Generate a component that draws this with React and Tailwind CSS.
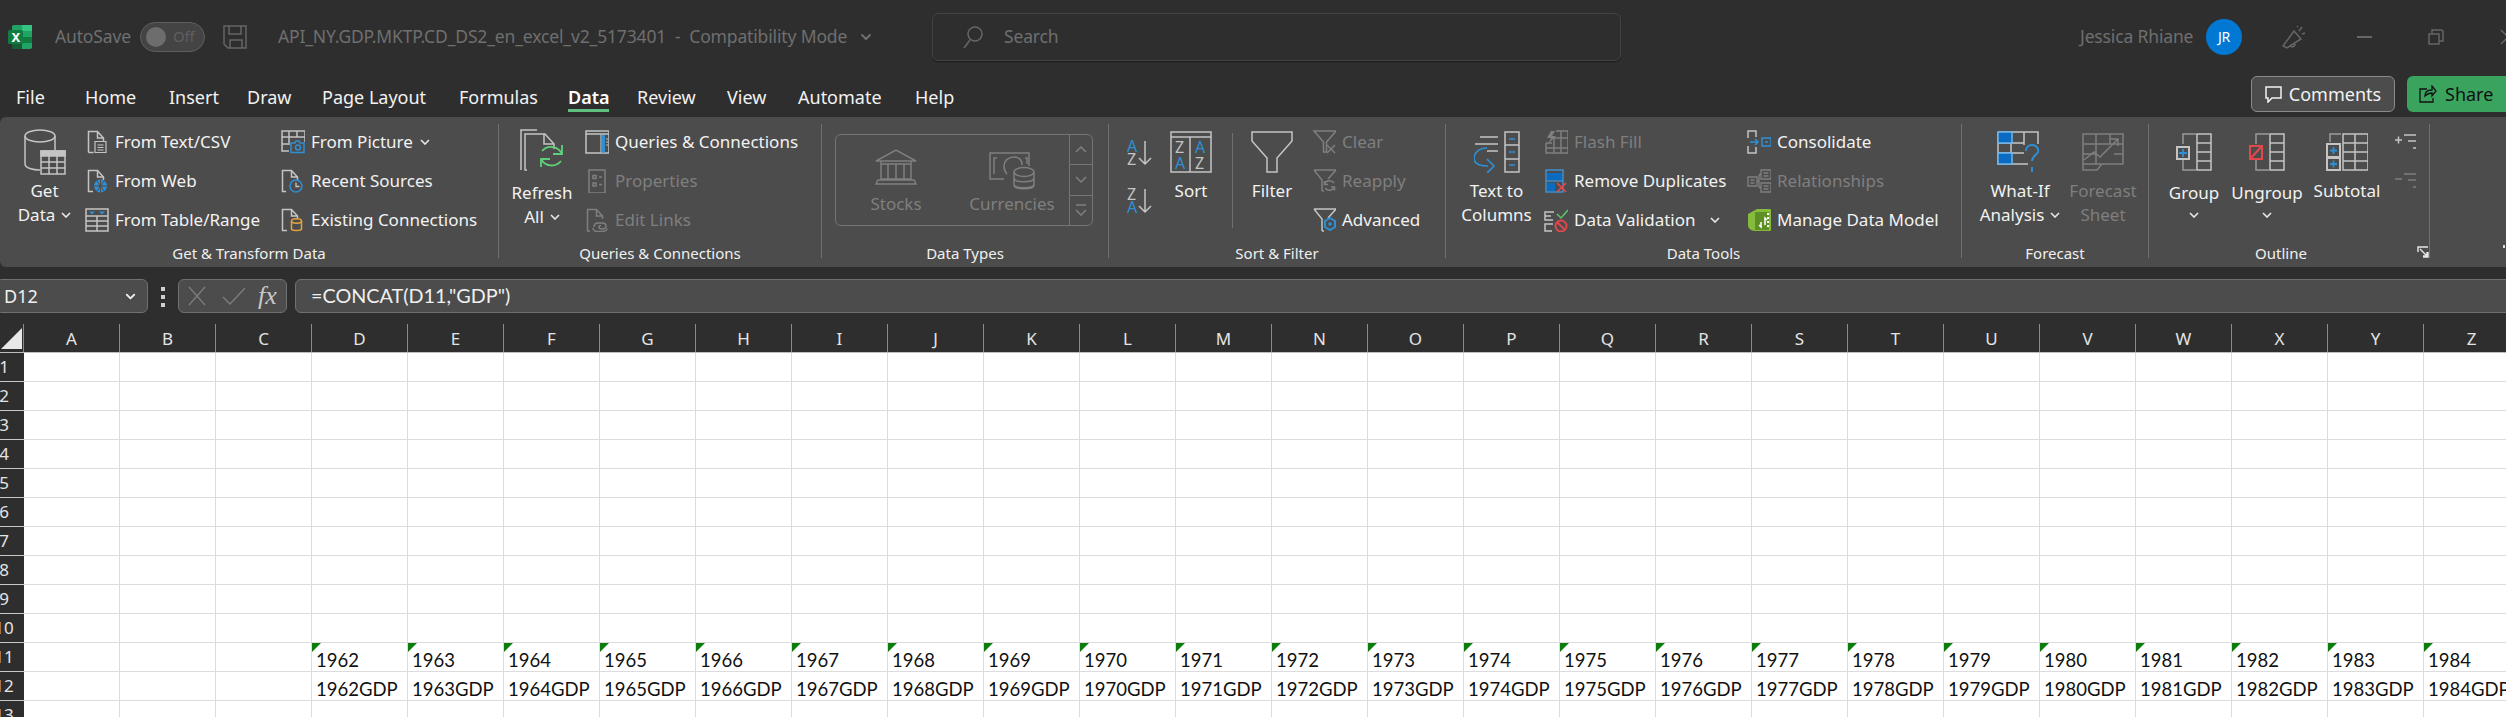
import { ChevronDown } from "lucide-react";

const GRAY = "#c4c4c4";
const DIM = "#7f7f7f";
const BLUE = "#2f8fd5";
const columns = "ABCDEFGHIJKLMNOPQRSTUVWXYZ".split("");
const rows = Array.from({ length: 13 }, (_, i) => i + 1);

const tabs = [
  { label: "File", width: "w-[69px]" },
  { label: "Home", width: "w-[84px]" },
  { label: "Insert", width: "w-[78px]" },
  { label: "Draw", width: "w-[75px]" },
  { label: "Page Layout", width: "w-[137px]" },
  { label: "Formulas", width: "w-[109px]" },
  { label: "Data", width: "w-[69px]", active: true },
  { label: "Review", width: "w-[90px]" },
  { label: "View", width: "w-[71px]" },
  { label: "Automate", width: "w-[117px]" },
  { label: "Help", width: "w-[50px]" },
];

function Ico({ w = 24, h = 24, color = GRAY, children }) {
  return (
    <svg width={w} height={h} viewBox={`0 0 ${w} ${h}`} fill="none" stroke={color} strokeWidth="1.5" className="shrink-0">
      {children}
    </svg>
  );
}

function Chevron({ className = "" }) {
  return (
    <svg width="10" height="6" viewBox="0 0 10 6" fill="none" stroke="#e8e8e8" strokeWidth="1.6" className={className}>
      <path d="M1 1l4 4 4-4" />
    </svg>
  );
}

const Page = ({ color = GRAY }) => <path d="M8 22.5H3.5V1.5h9l6 6.5v3" stroke={color} />;

const icons = {
  text: (
    <Ico>
      <path d="M3.5 22.5V1.5h9l6 6.5v4M12.500 1.500v6.500h6M3.500 22.500h5" />
      <path d="M10 11.500h11v11H10zM12.500 15h6M12.500 17.500h6M12.500 20h6" strokeWidth="1.200" />
    </Ico>
  ),
  web: (
    <Ico>
      <Page />
      <path d="M12.500 1.500v6.500h6" />
      <circle cx="15.500" cy="17" r="6.500" fill={BLUE} stroke="none" />
      <path d="M9 17h13M15.500 10.500v13M12 12c3 3 3 7 0 10M19 12c-3 3-3 7 0 10" stroke="#4c4c4c" strokeWidth="1" />
    </Ico>
  ),
  table: (
    <Ico>
      <path d="M1 1h22v22H1zM1 8h22M1 13h22M1 18h22M12 8v15" />
      <path d="M4 3.500h6l-3 3zM14 3.500h6l-3 3z" fill={BLUE} stroke="none" />
    </Ico>
  ),
  picture: (
    <Ico>
      <path d="M8 21H1V1h23v11M1 7h23M1 14h8M8 1v12M16 1v6" />
      <path d="M10 13h4l1-2h3l1 2h4v9.500H10z" stroke={BLUE} fill="#4c4c4c" />
      <circle cx="17" cy="17.500" r="2.500" stroke={BLUE} />
    </Ico>
  ),
  recent: (
    <Ico>
      <path d="M5 22.500H1.500V1.500h9l6 6.500v3M10.500 1.500v6.500h6" />
      <circle cx="15" cy="17" r="6" stroke={BLUE} />
      <path d="M15 13.500V17.500h3.500" stroke={GRAY} strokeWidth="1.300" />
    </Ico>
  ),
  existing: (
    <Ico>
      <path d="M6 22.500H1.500V1.500h9l6 6.500v2M10.500 1.500v6.500h6" />
      <path d="M10.500 13v8c0 2 10 2 10 0v-8" stroke="#e7a33e" />
      <ellipse cx="15.500" cy="13" rx="5" ry="2.200" stroke="#e7a33e" />
    </Ico>
  ),
  queries: (
    <Ico>
      <path d="M1 1h23v22H1zM1 4h23" />
      <path d="M16 4.500v18" strokeWidth="1.200" />
      <path d="M16.500 5h3.500v17.500h-3.500z" fill={BLUE} stroke="none" />
      <path d="M21 9h2M21 12h2M21 15h2" strokeWidth="1" />
    </Ico>
  ),
  properties: (
    <Ico color={DIM}>
      <path d="M4 1h16v23H4zM8 6.500h3v3H8zM8 14h3v3H8zM14 8h3M14 15.500h3" />
    </Ico>
  ),
  links: (
    <Ico color={DIM}>
      <path d="M5 23H2.500V1.500h9l6 6.500v3M11.500 1.500v6.500h6" />
      <path d="M9 19c0-3 2-4 4-4h4c3 0 4 1 4 3s-2 3-4 3-3-1-3-2 1-1.500 2-1.500M8 20c0 2 2 3.500 4 3.500h5c2 0 5-1 5-3" />
    </Ico>
  ),
  clear: (
    <Ico color={DIM}>
      <path d="M2 1h22L14.500 12v10H11.500V12z" />
      <path d="M15 15l8 8M23 15l-8 8" />
    </Ico>
  ),
  reapply: (
    <Ico color={DIM}>
      <path d="M2 1h22L16 10M10 22V11L2 1M10 22h2" />
      <path d="M22 14a5.500 5.500 0 0 0-9.500 1M13 19a5.500 5.500 0 0 0 9.500-1M12.500 12v3.500H16M22.500 21.500V18H19" />
    </Ico>
  ),
  advanced: (
    <Ico>
      <path d="M2 1h22L16 10M10 23V11L2 1M10 23h2" />
      <path d="M18 10l5 3v6l-5 3-5-3v-6z" stroke={BLUE} strokeWidth="2" />
      <circle cx="18" cy="16" r="1.800" fill={BLUE} stroke="none" />
    </Ico>
  ),
  flash: (
    <Ico color={DIM}>
      <path d="M2 13v10h22V1H12M2 18h22M2 13h6M10 8h14M10 8v15M17 1v22" />
      <path d="M7 1L3 8h4l-3 6 8-8H8l3-5z" fill={DIM} stroke="none" />
    </Ico>
  ),
  duplicates: (
    <Ico>
      <path d="M2 1h17v22H2zM2 12h17" stroke="#3e8fd0" />
      <path d="M3 4h15v7H3zM3 14h8v8H3z" fill="#0b6bc0" stroke="none" />
      <path d="M13 14l9 9M22 14l-9 9" stroke="#e2474b" strokeWidth="1.700" />
    </Ico>
  ),
  validation: (
    <Ico>
      <path d="M10 4H1v8h8M1 8h6M9 16H1v7h7" />
      <path d="M13 6l4 4 7-8" stroke="#5bc46e" />
      <circle cx="17" cy="18" r="5.500" stroke="#e2474b" strokeWidth="2" />
      <path d="M13 14l8 8" stroke="#e2474b" strokeWidth="2" />
    </Ico>
  ),
  consolidate: (
    <Ico>
      <path d="M1 8V1h8v6M1 16v7h8v-6" />
      <path d="M3 12h8M8 9l3 3-3 3" stroke={BLUE} />
      <path d="M15 8h9v8h-9zM18 12h3" stroke={BLUE} />
    </Ico>
  ),
  relationships: (
    <Ico color={DIM}>
      <path d="M1 8h9v9H1zM14 1h10v9H14zM14 14h10v9H14zM10 12h2M12 5.500h2M12 18.500h2M12 5.500v13M3.500 11h4M3.500 14h4M16.500 4h5M16.500 7h5M16.500 17h5M16.500 20h5" strokeWidth="1.300" />
    </Ico>
  ),
  model: (
    <Ico color="#8cc63f">
      <path d="M1 6l9-5h13c1 0 1 1 1 2v18c0 1 0 2-1 2H8c-4 0-7-3-7-6z" fill="#86bc3c" stroke="none" />
      <path d="M8 4h14v18H8z" fill="#5d8f25" stroke="none" />
      <path d="M14 14v5l-2-2M18 17v-7l2 2" stroke="#fff" />
      <path d="M20 6h2M20 10h2M20 14h2M20 18h2" stroke="#fff" strokeWidth="2" />
    </Ico>
  ),
  indent: (
    <Ico h={18}>
      <path d="M1 7h7M4.500 3.500v7M10 2h12M14 8h8M19 15h3" stroke={GRAY} />
    </Ico>
  ),
  outdent: (
    <Ico h={18} color={DIM}>
      <path d="M1 6h7M10 1h12M14 7h8M19 14h3" />
    </Ico>
  ),
};

const bigIcons = {
  getData: (
    <Ico w={42} h={46}>
      <path d="M1 7v28c0 4 8 6 15 6M31 7v14" />
      <ellipse cx="16" cy="7" rx="15" ry="6" />
      <path d="M17 22h24v23H17z" fill="#4c4c4c" />
      <path d="M17 22h24v5H17z" fill={GRAY} />
      <path d="M17 33h24M17 39h24M25 27v18M33 27v18" />
    </Ico>
  ),
  refresh: (
    <Ico w={44} h={46}>
      <path d="M1 41V1h16M7 41H5V5h20l9 10v5M24 5v10h10" />
      <path d="M22 22a12 12 0 0 1 20 3M41 32a12 12 0 0 1-20-2M42 16v9h-9M21 38v-8h9" stroke="#5fd07a" strokeWidth="1.800" />
    </Ico>
  ),
  stocks: (
    <Ico w={42} h={36} color={DIM}>
      <path d="M1 12L21 1l20 11zM6 12v19M13 15v16M21 15v16M29 15v16M36 12v19M6 15h30M6 30h30M1 35h40l-2-4H3z" />
    </Ico>
  ),
  currencies: (
    <Ico w={46} h={38} color={DIM}>
      <path d="M26 1H1v26h14M40 14V1H26M8 6H5v16M36 6h2v6" />
      <path d="M25 5c-6 0-10 4-10 9s2 7 3 8M25 5c5 0 8 3 8 8" />
      <ellipse cx="35" cy="20" rx="10" ry="4.500" />
      <path d="M25 20v13c0 5 20 5 20 0V20M25 26c0 5 20 5 20 0M25 32c0 5 20 5 20 0" />
    </Ico>
  ),
  sort: (
    <svg width="42" height="42" viewBox="0 0 42 42" fill="none" stroke={GRAY} strokeWidth="1.500" className="shrink-0">
      <path d="M1 1h40v40H1zM1 6h40M20 6v35" />
      <text x="5" y="22" fontSize="16" stroke="none" fill={GRAY} fontFamily="Noto Sans">Z</text>
      <text x="25" y="22" fontSize="16" stroke="none" fill={BLUE} fontFamily="Noto Sans">A</text>
      <text x="5" y="38" fontSize="16" stroke="none" fill={BLUE} fontFamily="Noto Sans">A</text>
      <text x="25" y="38" fontSize="16" stroke="none" fill={GRAY} fontFamily="Noto Sans">Z</text>
    </svg>
  ),
  filter: (
    <Ico w={42} h={42}>
      <path d="M1 1h40v9L26 27v14H16V27L1 10z" />
    </Ico>
  ),
  columns: (
    <Ico w={46} h={42}>
      <path d="M31 1h14v40H31zM31 14h14M31 28h14M6 6h18M1 13h23M13 20h11" />
      <path d="M35 8h6M35 21h6M35 34h6" stroke={BLUE} />
      <path d="M13 20C4 20 0 26 0 30c0 5 5 8 14 8M13 31l7 7-7 7" stroke={BLUE} strokeWidth="1.700" transform="translate(0 -3)" />
    </Ico>
  ),
  whatIf: (
    <Ico w={46} h={42}>
      <path d="M1 1h40v12M1 1v32h30M14 1v32M27 1v13M1 12h26M1 22h26" />
      <path d="M1 1h14v11H1zM1 22h14v11H1z" fill="#0b6bc0" stroke="#6fb4ea" />
      <path d="M29 20c0-4 3-6 6-6 4 0 7 3 6 7-1 3-6 4-6 9M35 36v5" stroke={BLUE} strokeWidth="2" />
    </Ico>
  ),
  forecast: (
    <Ico w={42} h={38} color={DIM}>
      <path d="M1 1h40v30H20l-5 6H1zM1 11h40M1 21h14M1 31h18M14 1v30M28 1v10M32 21h9" />
      <path d="M2 27l10-8 6 5 18-18M29 6h7v7" />
    </Ico>
  ),
  group: (
    <Ico w={36} h={38}>
      <path d="M7 11V1h13M7 27v10h13" stroke="#9a9a9a" />
      <path d="M21 1h14v36H21zM21 10h14M21 19h14M21 28h14" />
      <path d="M1 14h12v12H1z" fill="#4c4c4c" strokeWidth="2" />
      <path d="M3 20h8M7 16v8" stroke={BLUE} strokeWidth="1.800" />
    </Ico>
  ),
  ungroup: (
    <Ico w={36} h={38}>
      <path d="M7 11V1h13M7 27v10h13" stroke="#9a9a9a" />
      <path d="M21 1h14v36H21zM21 10h14M21 19h14M21 28h14" />
      <path d="M1 13h12v13H1zM2 25l10-11" stroke="#e2474b" strokeWidth="2" fill="#4c4c4c" />
    </Ico>
  ),
  subtotal: (
    <Ico w={42} h={38}>
      <path d="M4 9V1h11" stroke="#9a9a9a" />
      <path d="M17 1h25v36H17zM17 10h25M17 19h25M17 28h25M29 1v36" />
      <path d="M1 11h13v13H1zM1 25h13v12H1z" fill="#4c4c4c" strokeWidth="2" />
      <path d="M4 17.500h7M7.500 14v7M4 31h7M7.500 27.500v7" stroke={BLUE} strokeWidth="1.800" />
    </Ico>
  ),
};

function BigButton({ icon, top, bottom, chevron, width, dim, shift = "mt-[3px]" }) {
  return (
    <div className={`flex shrink-0 flex-col items-center pt-[4px] ${width} ${dim ? "text-[#7f7f7f]" : "text-[#f2f2f2]"}`}>
      <div className="flex h-[48px] items-center justify-center">{icon}</div>
      <div className={`whitespace-nowrap leading-[24px] ${shift}`}>{top}</div>
      <div className="flex h-[24px] items-center gap-[6px] whitespace-nowrap leading-[24px]">
        {bottom}
        {chevron && <Chevron />}
      </div>
    </div>
  );
}

function SmallItem({ icon, label, dim, chevron }) {
  return (
    <div className={`flex h-[39px] items-center gap-[6px] whitespace-nowrap ${dim ? "text-[#7f7f7f]" : "text-[#f2f2f2]"}`}>
      <span className="flex w-[24px] shrink-0 justify-start">{icon}</span>
      {label}
      {chevron}
    </div>
  );
}

function SmallCol({ width, children }) {
  return <div className={`-mt-[2px] flex shrink-0 flex-col ${width}`}>{children}</div>;
}

function Group({ width, label, labelClass = "", children, launcher }) {
  return (
    <section className={`relative flex h-[134px] shrink-0 flex-col border-r border-[#707070] ${width}`}>
      <div className="flex h-[124px] overflow-visible">{children}</div>
      <div className={`flex h-[10px] items-center justify-center whitespace-nowrap text-[15px] text-[#f0f0f0] ${labelClass}`}>{label}</div>
      {launcher && (
        <svg width="12" height="12" viewBox="0 0 12 12" fill="none" stroke="#e8e8e8" strokeWidth="1.400" className="absolute bottom-0 right-0">
          <path d="M11 6v5H6M1 6V1h10M3 3l7 7M6 10h4V6" />
        </svg>
      )}
    </section>
  );
}

function SortArrow({ top, bottom, topColor, bottomColor }) {
  return (
    <svg width="25" height="27" viewBox="0 0 25 27" fill="none" stroke={GRAY} strokeWidth="1.500">
      <text x="0" y="13" fontSize="16" stroke="none" fill={topColor} fontFamily="Noto Sans">{top}</text>
      <text x="0" y="26" fontSize="16" stroke="none" fill={bottomColor} fontFamily="Noto Sans">{bottom}</text>
      <path d="M18 2v23M12 19l6 6 6-6" />
    </svg>
  );
}

function TitleBar() {
  return (
    <header className="flex h-[73px] shrink-0 items-center overflow-hidden whitespace-nowrap text-[17.500px] tracking-[-0.150px] text-[#6f6f6f]">
      <svg width="24" height="24" viewBox="0 0 24 24" className="ml-[8px] shrink-0">
        <rect x="4" y="0" width="20" height="24" rx="2" fill="#21a366" />
        <rect x="14" y="0" width="10" height="6" fill="#33c481" />
        <rect x="14" y="12" width="10" height="6" fill="#107c41" />
        <rect x="4" y="12" width="10" height="12" fill="#185c37" />
        <rect x="0" y="5" width="15" height="14" rx="1.500" fill="#107c41" />
        <text x="3.500" y="16.500" fontSize="13" fontWeight="700" fill="#fff" fontFamily="Noto Sans">X</text>
      </svg>
      <span className="ml-[23px] w-[85px] shrink-0">AutoSave</span>
      <div className="flex h-[30px] w-[65px] shrink-0 items-center rounded-full border border-[#5e5e5e] bg-[#444] pl-[5px]">
        <span className="h-[20px] w-[20px] shrink-0 rounded-full bg-[#6d6d6d]" />
        <span className="ml-[7px] text-[15px] text-[#5f5f5f]">Off</span>
      </div>
      <span className="ml-[18px] shrink-0">
        <Ico color="#666">
          <path d="M1 1h22v22H5l-4-4zM6 1v8h12V1M7 23v-8h12v8" />
        </Ico>
      </span>
      <span className="ml-[31px] w-[580px] shrink-0 whitespace-pre">API_NY.GDP.MKTP.CD_DS2_en_excel_v2_5173401  -  Compatibility Mode</span>
      <ChevronDown size={16} strokeWidth={3} className="shrink-0" />
      <div className="ml-[58px] flex h-[48px] w-[689px] shrink-0 items-center rounded-[6px] border border-[#444] bg-[#2e2e2e] pl-[30px] shadow-[0_1px_1px_#1c1c1c]">
        <svg width="20" height="24" viewBox="0 0 20 24" fill="none" stroke="#666" strokeWidth="1.500">
          <circle cx="12" cy="9" r="7" />
          <path d="M7 15l-6 8" />
        </svg>
        <span className="ml-[21px]">Search</span>
      </div>
      <span className="ml-[459px] w-[126px] shrink-0">Jessica Rhiane</span>
      <div className="flex h-[36px] w-[36px] shrink-0 items-center justify-center rounded-full bg-[#0078d4] text-[14px] text-white">JR</div>
      <span className="ml-[40px] shrink-0">
        <Ico color="#666">
          <path d="M1 21L12 6l7 8-14 9zM8 20c1 3 5 2 5-1M17 6l3-4M20 9l3-1M15 2l1-1" />
        </Ico>
      </span>
      <span className="ml-[51px] h-[2px] w-[15px] shrink-0 bg-[#666]" />
      <span className="ml-[56px] shrink-0">
        <Ico w={16} h={16} color="#666">
          <path d="M1 5h10v10H1zM4 5V1h9a2 2 0 0 1 2 2v9h-4" />
        </Ico>
      </span>
      <span className="ml-[56px] shrink-0">
        <Ico w={16} h={16} color="#666">
          <path d="M1 1l14 14M15 1L1 15" />
        </Ico>
      </span>
    </header>
  );
}

function TabBar() {
  return (
    <nav className="flex h-[44px] shrink-0 overflow-hidden pl-[16px] text-[18px] text-[#f2f2f2]">
      <div className="flex flex-1 items-center pt-[4px]">
        {tabs.map((tab) => (
          <div key={tab.label} className={`relative shrink-0 whitespace-nowrap ${tab.width} ${tab.active ? "font-semibold text-white" : ""}`}>
            {tab.label}
            {tab.active && <span className="absolute left-0 top-[25px] h-[3px] w-[41px] bg-[#5fc07f]" />}
          </div>
        ))}
      </div>
      <button type="button" className="mt-[3px] flex h-[36px] w-[144px] shrink-0 items-center justify-center gap-[7px] rounded-[6px] border border-[#8a8a8a] bg-[#4c4c4c]">
        <svg width="17" height="17" viewBox="0 0 17 17" fill="none" stroke="#f2f2f2" strokeWidth="1.500">
          <path d="M1 1h15v11H7l-4 4v-4H1z" />
        </svg>
        Comments
      </button>
      <button type="button" className="-mr-[21px] ml-[12px] mt-[3px] flex h-[36px] w-[120px] shrink-0 items-center gap-[8px] rounded-[6px] bg-[#3aa45f] pl-[12px] text-[#111]">
        <svg width="18" height="18" viewBox="0 0 18 18" fill="none" stroke="#111" strokeWidth="1.300">
          <path d="M8 4H1v13h13v-4M6 11c0-4 3-6 7-6V1l4 5-4 5V8c-3 0-5 1-7 3z" />
        </svg>
        Share
      </button>
    </nav>
  );
}

function Ribbon() {
  return (
    <div className="flex h-[150px] shrink-0 overflow-hidden rounded-l-[6px] bg-[#4c4c4c] pt-[7px] text-[17px]">
      <Group width="w-[499px]" label="Get & Transform Data">
        <BigButton width="w-[85px] pl-[4px]" icon={bigIcons.getData} top="Get" bottom="Data" chevron />
        <SmallCol width="w-[196px]">
          <SmallItem icon={icons.text} label="From Text/CSV" />
          <SmallItem icon={icons.web} label="From Web" />
          <SmallItem icon={icons.table} label="From Table/Range" />
        </SmallCol>
        <SmallCol width="w-[217px]">
          <SmallItem icon={icons.picture} label="From Picture" chevron={<Chevron className="ml-[1px]" />} />
          <SmallItem icon={icons.recent} label="Recent Sources" />
          <SmallItem icon={icons.existing} label="Existing Connections" />
        </SmallCol>
      </Group>

      <Group width="w-[323px]" label="Queries & Connections">
        <BigButton width="w-[86px]" icon={bigIcons.refresh} top="Refresh" bottom="All" chevron shift="mt-[5px]" />
        <SmallCol width="w-[236px]">
          <SmallItem icon={icons.queries} label="Queries & Connections" />
          <SmallItem icon={icons.properties} label="Properties" dim />
          <SmallItem icon={icons.links} label="Edit Links" dim />
        </SmallCol>
      </Group>

      <Group width="w-[287px]" label="Data Types">
        <div className="ml-[13px] mt-[10px] flex h-[92px] w-[258px] rounded-[6px] border border-[#757575] text-[#7f7f7f]">
          <div className="flex w-[120px] flex-col items-center pt-[14px]">
            {bigIcons.stocks}
            <span className="mt-[6px]">Stocks</span>
          </div>
          <div className="flex w-[112px] flex-col items-center pt-[17px]">
            {bigIcons.currencies}
            <span className="mt-[1px]">Currencies</span>
          </div>
          <div className="ml-auto flex w-[23px] flex-col border-l border-[#757575]">
            {["M4 8l5-5 5 5", "M4 3l5 5 5-5", "M4 1h10M4 6l5 5 5-5"].map((d, i) => (
              <div key={d} className={`flex flex-1 items-center justify-center ${i < 2 ? "border-b border-[#757575]" : ""}`}>
                <svg width="18" height="12" viewBox="0 0 18 12" fill="none" stroke={DIM} strokeWidth="1.500">
                  <path d={d} />
                </svg>
              </div>
            ))}
          </div>
        </div>
      </Group>

      <Group width="w-[337px]" label="Sort & Filter">
        <div className="ml-[18px] flex w-[25px] shrink-0 flex-col gap-[21px] pt-[15px]">
          <SortArrow top="A" bottom="Z" topColor={BLUE} bottomColor={GRAY} />
          <SortArrow top="Z" bottom="A" topColor={GRAY} bottomColor={BLUE} />
        </div>
        <BigButton width="ml-[11px] w-[56px]" icon={bigIcons.sort} top="Sort" />
        <div className="ml-[13px] mt-[9px] h-[95px] w-px shrink-0 bg-[#707070]" />
        <BigButton width="ml-[11px] w-[56px]" icon={bigIcons.filter} top="Filter" />
        <SmallCol width="ml-[12px] w-[120px]">
          <SmallItem icon={icons.clear} label="Clear" dim />
          <SmallItem icon={icons.reapply} label="Reapply" dim />
          <SmallItem icon={icons.advanced} label="Advanced" />
        </SmallCol>
      </Group>

      <Group width="w-[516px]" label="Data Tools">
        <BigButton width="w-[98px] pl-[3px]" icon={bigIcons.columns} top="Text to" bottom="Columns" />
        <SmallCol width="w-[203px]">
          <SmallItem icon={icons.flash} label="Flash Fill" dim />
          <SmallItem icon={icons.duplicates} label="Remove Duplicates" />
          <SmallItem icon={icons.validation} label="Data Validation" chevron={<Chevron className="ml-[8px]" />} />
        </SmallCol>
        <SmallCol width="w-[210px]">
          <SmallItem icon={icons.consolidate} label="Consolidate" />
          <SmallItem icon={icons.relationships} label="Relationships" dim />
          <SmallItem icon={icons.model} label="Manage Data Model" />
        </SmallCol>
      </Group>

      <Group width="w-[187px]" label="Forecast">
        <BigButton width="ml-[10px] w-[96px]" icon={bigIcons.whatIf} top="What-If" bottom="Analysis" chevron />
        <BigButton width="w-[70px]" icon={bigIcons.forecast} top="Forecast" bottom="Sheet" dim />
      </Group>

      <Group width="w-[281px]" label="Outline" labelClass="pr-[16px]" launcher>
        <BigButton width="w-[90px]" icon={bigIcons.group} top="Group" chevron shift="mb-[-2px] mt-[5px]" />
        <BigButton width="w-[56px]" icon={bigIcons.ungroup} top="Ungroup" chevron shift="mb-[-2px] mt-[5px]" />
        <BigButton width="ml-[7px] w-[90px]" icon={bigIcons.subtotal} top="Subtotal" />
        <div className="ml-[2px] flex shrink-0 flex-col gap-[22px] pt-[9px]">
          {icons.indent}
          {icons.outdent}
        </div>
      </Group>

      <div className="relative flex-1">
        <span className="absolute right-[1px] top-[121px] h-[3px] w-[2px] bg-[#ddd]" />
      </div>
    </div>
  );
}

function FormulaBar() {
  return (
    <div className="flex h-[57px] shrink-0 items-start pt-[12px] text-[18px] text-[#f0f0f0]">
      <div className="-ml-[4px] flex h-[34px] w-[152px] shrink-0 items-center justify-between rounded-[6px] border border-[#707070] bg-[#4c4c4c] pl-[7px] pr-[9px]">
        D12
        <ChevronDown size={15} strokeWidth={3} />
      </div>
      <div className="ml-[13px] flex w-[4px] shrink-0 flex-col gap-[4px] pt-[8px]">
        <span className="h-[4px] w-[4px] bg-[#d0d0d0]" />
        <span className="h-[4px] w-[4px] bg-[#d0d0d0]" />
        <span className="h-[4px] w-[4px] bg-[#d0d0d0]" />
      </div>
      <div className="ml-[13px] flex h-[34px] w-[109px] shrink-0 items-center rounded-[6px] border border-[#707070] bg-[#4c4c4c] pl-[8px]">
        <svg width="20" height="20" viewBox="0 0 20 20" fill="none" stroke="#7d7d7d" strokeWidth="1.300">
          <path d="M2 1l16 18M18 1L2 19" />
        </svg>
        <svg width="24" height="18" viewBox="0 0 24 18" fill="none" stroke="#7d7d7d" strokeWidth="1.300" className="ml-[15px]">
          <path d="M1 10l7 7L23 1" />
        </svg>
        <span className="ml-[12px] font-['Liberation_Serif',serif] text-[26px] italic leading-[30px] text-[#c8c8c8]">fx</span>
      </div>
      <div className="ml-[8px] flex h-[34px] w-[2300px] shrink-0 items-center rounded-[6px] border border-[#707070] bg-[#4c4c4c] pl-[15px] font-['Lato',sans-serif] text-[19.800px]">
        =CONCAT(D11,"GDP")
      </div>
    </div>
  );
}

function Sheet() {
  return (
    <div className="min-h-0 flex-1 overflow-hidden bg-white">
      <div className="flex h-[29px] border-b border-[#bdbdbd] bg-[#2e2e2e] text-[17px] text-[#e4e4e4]">
        <div className="w-[24px] shrink-0 border-r border-[#8a8a8a] pl-[1px] pt-[4px]">
          <svg width="21" height="21" viewBox="0 0 21 21">
            <path d="M21 0v21H0z" fill="#e8e8e8" />
          </svg>
        </div>
        {columns.map((col) => (
          <div key={col} className="flex w-[96px] shrink-0 items-center justify-center border-r border-[#8a8a8a] pt-[1px]">
            {col}
          </div>
        ))}
      </div>
      {rows.map((row) => (
        <div key={row} className="flex h-[29px]">
          <div className="flex w-[24px] shrink-0 items-center overflow-hidden border-b border-[#c8c8c8] bg-[#2e2e2e] text-[17px] text-[#e4e4e4]">
            <span className="flex w-[8px] shrink-0 justify-center">{row}</span>
          </div>
          {columns.map((col, i) => (
            <div key={col} className="relative flex w-[96px] shrink-0 items-end overflow-hidden whitespace-nowrap border-b border-r border-[#dcdcdc] pl-[4px] font-['Lato',sans-serif] text-[18.500px] leading-[22px] text-[#111]">
              {row === 11 && i >= 3 && (
                <>
                  <span className="absolute left-0 top-0 border-r-[9px] border-t-[9px] border-r-transparent border-t-[#0a7d0a]" />
                  {1959 + i}
                </>
              )}
              {row === 12 && i >= 3 && `${1959 + i}GDP`}
            </div>
          ))}
        </div>
      ))}
    </div>
  );
}

export default function App() {
  return (
    <div className="flex h-[717px] w-[2506px] flex-col overflow-hidden bg-[#2e2e2e] font-['Noto_Sans',sans-serif]">
      <TitleBar />
      <TabBar />
      <Ribbon />
      <FormulaBar />
      <Sheet />
    </div>
  );
}
